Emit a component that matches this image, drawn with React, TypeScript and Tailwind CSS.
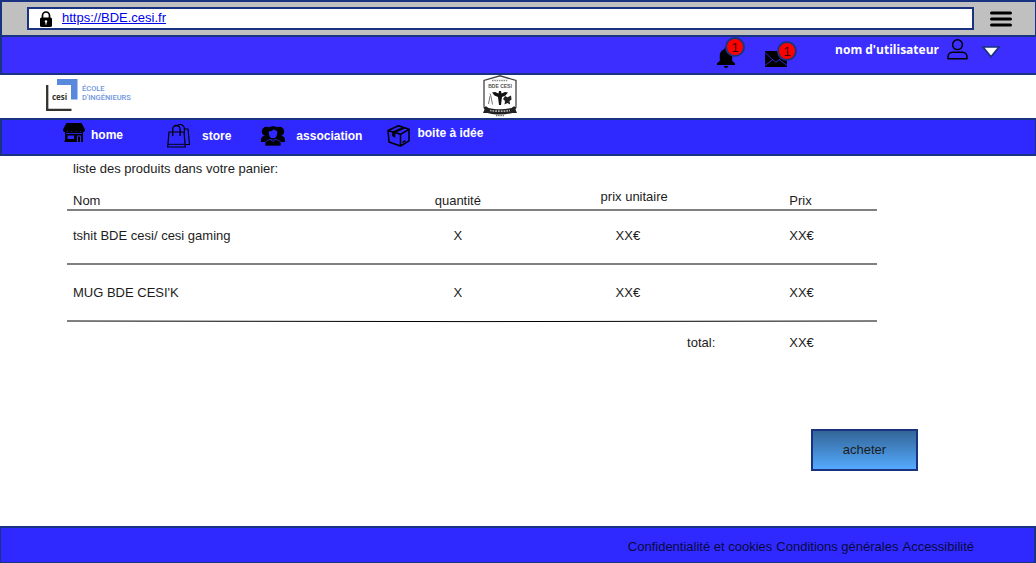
import React from "react";

function LockIcon() {
  return (
    <svg className="h-4 w-3 shrink-0" viewBox="0 0 12 16" aria-hidden="true">
      <path d="M2.5 8V4.500a3.500 3.500 0 0 1 7 0V8" fill="none" stroke="#000" strokeWidth="1.700" />
      <rect x="0" y="6.500" width="12" height="9.500" rx="1.600" fill="#000" />
      <circle cx="6" cy="10.400" r="1.200" fill="#fff" />
      <path d="M6 10v3.600" stroke="#fff" strokeWidth="1" />
    </svg>
  );
}

function MenuIcon() {
  return (
    <svg className="h-4 w-[22px]" viewBox="0 0 22 16" aria-hidden="true">
      <path d="M1.500 2h19M1.500 8h19M1.500 14h19" stroke="#000" strokeWidth="3" strokeLinecap="round" />
    </svg>
  );
}

function BellIcon() {
  return (
    <svg className="h-[21px] w-[18px]" viewBox="0 0 18 21" aria-hidden="true">
      <path d="M9 0c.9 0 1.500.6 1.500 1.500v.7c2.900.7 4.700 3 4.700 6V14l2.800 2.300V18H0v-1.700L2.800 14V8.200c0-3 1.800-5.300 4.700-6v-.7C7.500.6 8.100 0 9 0z" />
      <path d="M6.800 19h4.400c-.3 1.200-1.100 2-2.200 2s-1.900-.8-2.200-2z" />
    </svg>
  );
}

function MailIcon() {
  return (
    <svg className="h-4 w-[22px]" viewBox="0 0 22 16" aria-hidden="true">
      <rect width="22" height="16" />
      <path d="M0 1.500l8.500 8 2.500 1.700 2.500-1.700 8.500-8M0 14.500l8-6M22 14.500l-8-6" fill="none" stroke="#3b2eff" strokeWidth=".8" />
    </svg>
  );
}

function UserIcon() {
  return (
    <svg className="h-[21px] w-[21px]" viewBox="0 0 21 21" fill="none" stroke="#000" strokeWidth="1.500" aria-hidden="true">
      <circle cx="10.500" cy="5.700" r="4.900" />
      <path d="M1 19.700v-1.500c0-3 2-4.900 4.500-4.900h10c2.500 0 4.500 1.900 4.500 4.900v1.500z" strokeLinejoin="round" />
    </svg>
  );
}

function TriangleIcon() {
  return (
    <svg className="h-3 w-5" viewBox="0 0 20 12" aria-hidden="true">
      <path d="M2 1h16L10 10.800z" fill="#fff" stroke="#1a3380" strokeWidth="1.700" />
    </svg>
  );
}

function ShopIcon() {
  return (
    <svg className="h-5 w-[22px]" viewBox="0 0 22 20" aria-hidden="true">
      <path d="M3.500 0h15L22 6.500c0 1.900-1 2.700-2.200 2.700s-2.200-.8-2.200-2c0 1.200-1 2-2.200 2s-2.200-.8-2.200-2c0 1.200-1 2-2.200 2s-2.200-.8-2.200-2c0 1.200-1 2-2.200 2s-2.200-.8-2.200-2c0 1.200-1 2-2.200 2S0 8.400 0 6.500z" />
      <path fillRule="evenodd" d="M2 8.500h18V19H2zM4.500 12.500V16H11v-3.500zM14 12.500V19h4v-6.500z" />
      <path d="M1.500 17.500h11.500v1.500H1.500zM15 13.500h2V19h-2z" />
      <path d="M3 10.500h16" stroke="#2f29ff" strokeWidth=".8" />
    </svg>
  );
}

function BagsIcon() {
  return (
    <svg className="h-6 w-6" viewBox="0 0 24 24" fill="none" stroke="#000" aria-hidden="true">
      <path d="M2 8h15l1.300 15H.7z" strokeWidth="1.200" />
      <path d="M1 20.300h17" strokeWidth=".9" />
      <path d="M5.700 12V5.200a3.700 3.700 0 0 1 7.400 0V12" strokeWidth="1.300" />
      <path d="M11 1.700C12 .4 14 .3 15.500 1.200c1.300.8 2 2 2 3.300v5.500M16.500 5H21l1.500 15.500H19" strokeWidth="1.100" />
    </svg>
  );
}

function GroupIcon() {
  return (
    <svg className="h-5 w-6" viewBox="0 0 24 20" aria-hidden="true">
      <circle cx="5.500" cy="5.500" r="4.700" />
      <circle cx="18.500" cy="5.500" r="4.700" />
      <path d="M0 16v-2.500C0 11 2 10 5 9.500h14c3 .5 5 1.500 5 4V16z" />
      <path d="M4 20v-2.300c0-2.500 2-3.400 5-4.200h6c3 .8 5 1.700 5 4.200V20z" stroke="#2f29ff" strokeWidth=".7" />
      <path d="M7 5.200C7 2.500 9 .8 12 .8s5 1.700 5 4.400c0 4.300-1.700 7.800-5 7.800S7 9.500 7 5.200z" fill="#2f29ff" stroke="#000" strokeWidth="1.300" />
      <path d="M7 5.500C10 5.500 12 4.500 13 3.300c1 1.200 2.500 1.700 4 2.200V4C16 1.500 14.500.7 12 .7S7.500 2 7 4z" />
      <path d="M9.500 13.700l2.500 1.600 2.500-1.600" fill="none" stroke="#2f29ff" strokeWidth=".8" />
    </svg>
  );
}

function BoxIcon() {
  return (
    <svg className="h-[22px] w-[23px]" viewBox="0 0 23 22" fill="none" stroke="#000" strokeWidth="1.500" strokeLinejoin="round" aria-hidden="true">
      <path d="M1 5.500L11.500.8 22 4.300v11.500L13.500 21 2 17z" />
      <path d="M1 5.500l12.500 3.800L22 4.300M13.500 9.300V21" />
      <path d="M5.500 6.800L16 2.200l2.200.8L8 7.800v4.500l-2.500-1.300z" fill="#000" strokeWidth=".6" />
      <path d="M15.500 17.300l3-1.700" />
    </svg>
  );
}

function SchoolLogo() {
  return (
    <svg className="h-8 w-[87px]" viewBox="0 0 87 32" role="img" aria-label="cesi école d'ingénieurs">
      <path d="M11 0h20.500v20.500H25V6H11z" fill="#5989dc" />
      <path d="M1.200 6v25H25.500" fill="none" stroke="#33332d" strokeWidth="2.300" />
      <text x="6" y="20.500" fontFamily="'Open Sans', sans-serif" fontSize="8" fontWeight="700" fill="#33332d">cesi</text>
      <g fontFamily="'Liberation Sans Narrow', Roboto, sans-serif" fontSize="7.500" fontWeight="500" fill="#6e96dc">
        <text x="36" y="11.500">ÉCOLE</text>
        <text x="36" y="20.500">D'INGÉNIEURS</text>
      </g>
    </svg>
  );
}

function CrestLogo() {
  return (
    <svg className="h-[42px] w-[34px]" viewBox="0 0 34 42" role="img" aria-label="BDE CESI">
      <path d="M1 31V5.500L17 .8l16 4.700V31" fill="#fff" stroke="#444" strokeWidth="1.300" />
      <path d="M9 5.500h16" stroke="#888" strokeWidth="1.500" strokeDasharray="1.500 .8" />
      <text x="17" y="13" textAnchor="middle" fontFamily="'Liberation Sans', sans-serif" fontSize="5" fontWeight="700" fill="#555">BDE CESI</text>
      <path d="M15.500 18.500l.5-2.500h2l.5 2.500 3.500-1.500 3 .5-2.500 3-3.500 1.500L18 30h-2l-1-8-3.500-1.500-2.500-3 3-.5z" fill="#111" />
      <path d="M22 21l2.500 1.200 3.500-1.700.5 4-2 1.500.7 3.500-2.700-1.500-3 1.500.5-3.500-2-2z" fill="#222" />
      <path d="M7 18.500l1 3 1.500 8M5.500 29l1.500-8" fill="none" stroke="#777" strokeWidth="1" />
      <path d="M0 31.500h3.500l2 1.500c7 1.700 16 1.700 23 0l2-1.500H34l-1.500 3L34 38h-4.500c-8 2-17 2-25 0H0l1.500-3.500z" fill="#222" />
      <path d="M7 35.500c6 1 14 1 20 0" fill="none" stroke="#aaa" strokeWidth="1.700" strokeDasharray="1.700 1" />
      <path d="M13 40.500h8" stroke="#777" strokeWidth="1.500" strokeDasharray="1.500 .7" />
    </svg>
  );
}

function Badge({ label }: { label: string }) {
  return (
    <span className="absolute -top-2.5 -right-2.5 flex h-5 w-5 items-center justify-center rounded-full border-2 border-[#1a3380] bg-[#ff0000] text-[13px] leading-none text-[#400000]">
      {label}
    </span>
  );
}

const products = [
  { name: "tshit BDE cesi/ cesi gaming", qty: "X", unit: "XX€", price: "XX€" },
  { name: "MUG BDE CESI'K", qty: "X", unit: "XX€", price: "XX€" },
];

const navItems = [
  { label: "home", icon: <ShopIcon />, place: "ml-[61px] mb-1.5 items-end gap-[6px]" },
  { label: "store", icon: <BagsIcon />, place: "ml-[44px] items-center gap-[11px]" },
  { label: "association", icon: <GroupIcon />, place: "ml-[30px] items-center gap-[11px]" },
  { label: "boite à idée", icon: <BoxIcon />, place: "ml-[25px] items-start gap-[7px]" },
];

export default function App() {
  return (
    <div className="flex min-h-screen flex-col bg-white font-['Liberation_Sans',Arial,sans-serif] text-[13px] leading-4 text-[#1c1c1c]">
      <div className="flex h-[37px] items-center border-2 border-r border-[#1a3380] bg-[#c0c0c0] pr-[23px] pl-[25px]">
        <div className="flex h-[23px] flex-1 items-center gap-[10px] border-2 border-[#1a3380] bg-white pl-[11px]">
          <LockIcon />
          <a href="https://BDE.cesi.fr" className="pb-0.5 text-[#0000ee] underline">https://BDE.cesi.fr</a>
        </div>
        <button type="button" aria-label="Menu" className="ml-4">
          <MenuIcon />
        </button>
      </div>

      <header>
        <div className="flex h-[38px] items-start justify-end border-b-2 border-l-2 border-[#1a3380] bg-[#3b2eff] pr-[35px]">
          <button type="button" aria-label="Notifications" className="relative mt-[10px]">
            <BellIcon />
            <Badge label="1" />
          </button>
          <button type="button" aria-label="Messages" className="relative mt-[14px] ml-[30px]">
            <MailIcon />
            <Badge label="1" />
          </button>
          <button type="button" className="ml-12 flex items-start">
            <span className="mt-[5px] font-['Open_Sans',sans-serif] text-[12px] font-bold text-white">nom d'utilisateur</span>
            <span className="mt-0.5 ml-2"><UserIcon /></span>
            <span className="mt-[9px] ml-[13px]"><TriangleIcon /></span>
          </button>
        </div>
        <div className="grid h-[43px] grid-cols-[1fr_auto_1fr] items-start pr-[82px] pl-[46px]">
          <span className="pt-1"><SchoolLogo /></span>
          <CrestLogo />
        </div>
        <nav className="flex h-[38px] items-center border-2 border-r border-[#1a3380] bg-[#2f29ff] pb-0.5 text-[12px] font-bold text-white">
          {navItems.map((item) => (
            <a key={item.label} href="#" className={`flex ${item.place}`}>
              {item.icon}
              <span>{item.label}</span>
            </a>
          ))}
        </nav>
      </header>

      <main className="flex-1 pr-[118px] pl-[67px]">
        <h1 className="pt-[5px] pl-1.5">liste des produits dans votre panier:</h1>
        <div className="mr-[41px] pt-[7px]">
          <table className="w-full table-fixed border-collapse text-left">
            <colgroup>
              <col className="w-[41%]" />
              <col className="w-[15%]" />
              <col className="w-[27%]" />
              <col className="w-[17%]" />
            </colgroup>
            <thead>
              <tr className="h-[26px] border-b-2 border-[#808080] align-bottom">
                <th className="pl-1.5 font-normal">Nom</th>
                <th className="pr-1 text-center font-normal">quantité</th>
                <th className="pb-1 pl-20 font-normal">prix unitaire</th>
                <th className="pl-[50px] font-normal">Prix</th>
              </tr>
            </thead>
            <tbody>
              {products.map((p) => (
                <tr key={p.name} className="h-[56px] border-b-2 border-[#808080] first:h-[54px] last:border-0 [&:first-child>td]:pb-[3px]">
                  <td className="pl-1.5">{p.name}</td>
                  <td className="pr-1 text-center">{p.qty}</td>
                  <td className="pl-[95px]">{p.unit}</td>
                  <td className="pl-[50px]">{p.price}</td>
                </tr>
              ))}
            </tbody>
            <tfoot>
              <tr>
                <td colSpan={4} className="p-0">
                  <svg className="block h-[3px] w-full" viewBox="0 0 810 3" preserveAspectRatio="none" aria-hidden="true">
                    <path d="M0 1l405 .6L810 1" fill="none" stroke="#000" />
                  </svg>
                </td>
              </tr>
              <tr className="h-10">
                <td colSpan={2} />
                <td className="pr-6 text-right">total:</td>
                <td className="pl-[50px]">XX€</td>
              </tr>
            </tfoot>
          </table>
        </div>
        <div className="flex justify-end pt-[66px] pb-[55px]">
          <button type="button" className="h-[42px] w-[107px] border-2 border-[#1a3380] bg-linear-to-b from-[#336699] to-[#55aaff]">
            acheter
          </button>
        </div>
      </main>

      <footer className="flex h-[37px] items-center justify-end gap-1 border-2 border-b border-l border-[#1a3380] bg-[#2f29ff] pt-1 pr-[60px] text-[#0a0a40]">
        <a href="#">Confidentialité et cookies</a>
        <a href="#">Conditions générales</a>
        <a href="#">Accessibilité</a>
      </footer>
    </div>
  );
}
